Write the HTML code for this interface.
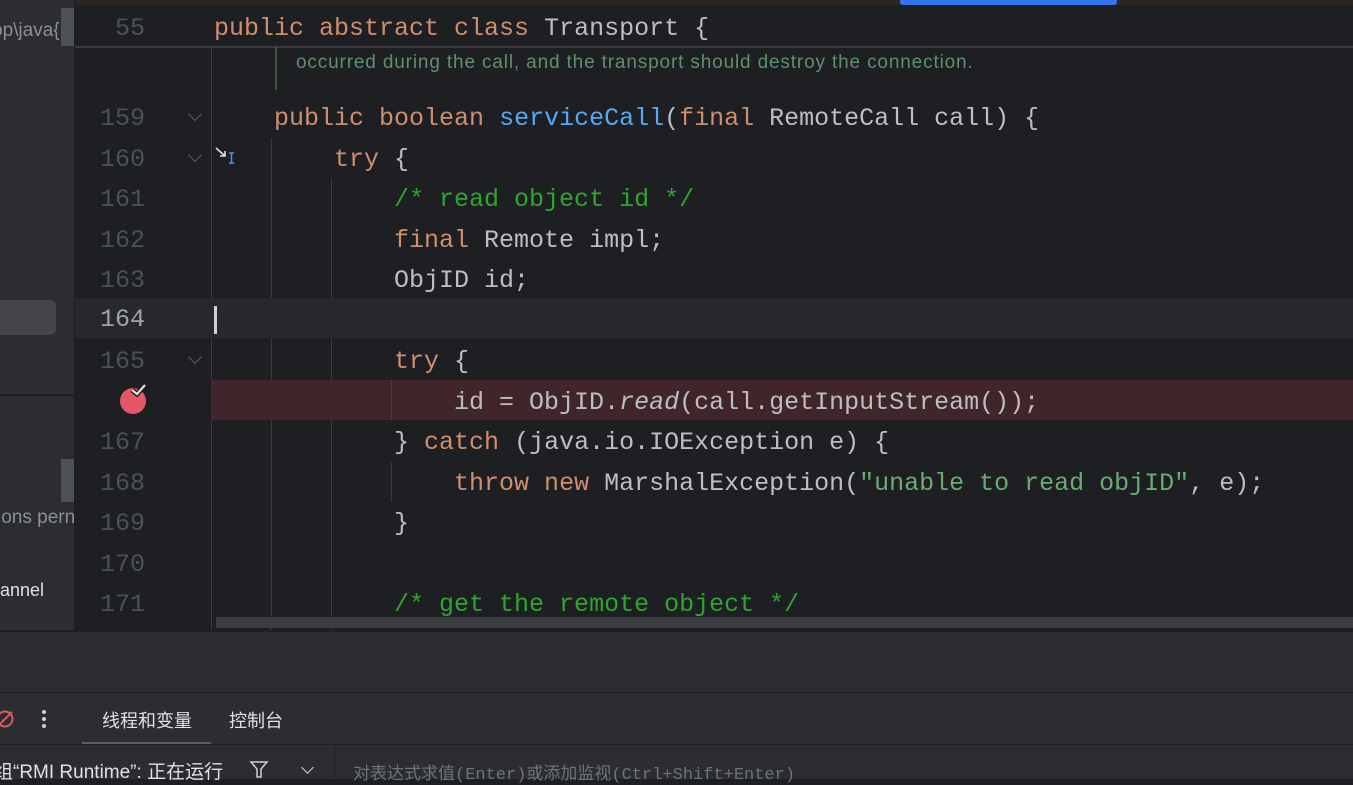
<!DOCTYPE html>
<html><head><meta charset="utf-8"><style>
body{margin:0;width:1353px;height:777px;overflow:hidden;background:#1e1f22;position:relative;font-family:"Liberation Sans","Noto Sans CJK SC",sans-serif}
.a{position:absolute}
.ln{position:absolute;left:75px;width:70px;text-align:right;font:25px/40px "Liberation Mono",monospace;color:#4b5059;margin-top:2px}
.c{position:absolute;left:214px;white-space:pre;font:25px/40px "Liberation Mono",monospace;color:#bcbec4;margin-top:2px}
.k{color:#cf8e6d}.m{color:#56a8f5}.s{color:#6aab73}.cm{color:#2ea52e}.i{font-style:italic}
.g{position:absolute;width:1px;background:#393b40}
.f{position:absolute;left:190px;width:9px;height:9px;border-right:1.5px solid #5a5d63;border-bottom:1.5px solid #5a5d63;transform:rotate(45deg)}
</style></head><body>
<!-- left panel -->
<div class="a" style="left:0;top:0;width:74px;height:630px;background:#2b2d30"></div>
<div class="a" style="top:20px;font-size:19px;color:#8c8f94;white-space:nowrap;left:-8px">op\java{</div>
<div class="a" style="left:61px;top:8px;width:13px;height:38px;background:#4e5157"></div>
<div class="a" style="left:0;top:300px;width:56px;height:35px;background:#43454a;border-radius:0 6px 6px 0"></div>
<div class="a" style="left:0;top:394px;width:74px;height:2px;background:#1e1f22"></div>
<div class="a" style="left:61px;top:459px;width:13px;height:43px;background:#4e5157"></div>
<div class="a" style="left:-3px;top:507px;font-size:19px;color:#8c8f94;white-space:nowrap">ions pern</div>
<div class="a" style="left:0;top:580px;font-size:18px;color:#dfe1e5">annel</div>
<!-- top strip -->
<div class="a" style="left:75px;top:0;width:1278px;height:5px;background:#2b2622"></div>
<div class="a" style="left:900px;top:0;width:217px;height:5px;background:#3574f0;border-radius:0 0 3px 3px"></div>
<div class="a" style="left:75px;top:46px;width:1278px;height:2px;background:#393b40"></div>
<div class="ln" style="top:7px">55</div>
<div class="c" style="top:7px"><span class="k">public abstract class</span> Transport {</div>
<!-- gutter separator & guides -->
<div class="g" style="left:211px;top:48px;height:582px"></div>
<div class="g" style="left:271px;top:138px;height:492px"></div>
<div class="g" style="left:331px;top:178px;height:452px"></div>
<div class="g" style="left:391px;top:380px;height:40px"></div>
<div class="g" style="left:391px;top:462px;height:40px"></div>
<!-- doc comment -->
<div class="a" style="left:275px;top:47px;width:2px;height:43px;background:#3d5a40"></div>
<div class="a" style="left:296px;top:52px;font-size:19px;letter-spacing:0.85px;color:#5f8f6e;white-space:nowrap">occurred during the call, and the transport should destroy the connection.</div>
<!-- current line -->
<div class="a" style="left:75px;top:298px;width:1278px;height:40px;background:#26282e"></div>
<div class="a" style="left:214px;top:306px;width:3px;height:28px;background:#ced0d6"></div>
<!-- breakpoint line -->
<div class="a" style="left:211px;top:380px;width:1142px;height:40px;background:#40252a"></div>
<div class="g" style="left:391px;top:380px;height:40px;background:#4a3a3e"></div>
<div class="a" style="left:120px;top:388px;width:26px;height:26px;border-radius:50%;background:#e55765"></div>
<svg class="a" style="left:130px;top:383px" width="18" height="14"><path d="M2 7 L7 11 L15 2" stroke="#1e1f22" stroke-width="5" fill="none"/><path d="M2 7 L7 11 L15 2" stroke="#dfe1e5" stroke-width="2.2" fill="none"/></svg>

<div class="ln" style="top:97px">159</div><div class="f" style="top:109px"></div>
<div class="c" style="top:97px">    <span class="k">public boolean</span> <span class="m">serviceCall</span>(<span class="k">final</span> RemoteCall call) {</div>
<div class="ln" style="top:138px">160</div><div class="f" style="top:150px"></div>
<svg class="a" style="left:214px;top:146px" width="24" height="20"><path d="M2 2 L11 10 M6 10 H11 V5" stroke="#dfe1e5" stroke-width="1.6" fill="none"/><path d="M15 7 H20 M17.5 7 V17 M15 17 H20" stroke="#4d8ff0" stroke-width="1.5" fill="none"/></svg>
<div class="c" style="top:138px">        <span class="k">try</span> {</div>
<div class="ln" style="top:178px">161</div>
<div class="c" style="top:178px">            <span class="cm">/* read object id */</span></div>
<div class="ln" style="top:219px">162</div>
<div class="c" style="top:219px">            <span class="k">final</span> Remote impl;</div>
<div class="ln" style="top:259px">163</div>
<div class="c" style="top:259px">            ObjID id;</div>
<div class="ln" style="top:298px;color:#a1a3ab">164</div>
<div class="ln" style="top:340px">165</div><div class="f" style="top:352px"></div>
<div class="c" style="top:340px">            <span class="k">try</span> {</div>
<div class="c" style="top:381px">                id = ObjID.<span class="i">read</span>(call.getInputStream());</div>
<div class="ln" style="top:421px">167</div>
<div class="c" style="top:421px">            } <span class="k">catch</span> (java.io.IOException e) {</div>
<div class="ln" style="top:462px">168</div>
<div class="c" style="top:462px">                <span class="k">throw new</span> MarshalException(<span class="s">"unable to read objID"</span>, e);</div>
<div class="ln" style="top:502px">169</div>
<div class="c" style="top:502px">            }</div>
<div class="ln" style="top:543px">170</div>
<div class="ln" style="top:583px">171</div>
<div class="c" style="top:583px">            <span class="cm">/* get the remote object */</span></div>
<!-- h scrollbar -->
<div class="a" style="left:216px;top:617px;width:1137px;height:11px;background:#3a3c40"></div>
<!-- bottom panel -->
<div class="a" style="left:0;top:630px;width:1353px;height:147px;background:#2b2d30;border-top:2px solid #1e1f22"></div>
<div class="a" style="left:0;top:692px;width:1353px;height:1px;background:#1e1f22"></div>
<svg class="a" style="left:-6px;top:708px" width="22" height="22"><circle cx="11" cy="11" r="7.5" stroke="#db5c5c" stroke-width="2" fill="none"/><path d="M4 18 L18 4" stroke="#db5c5c" stroke-width="2"/></svg>
<div class="a" style="left:42px;top:710px;width:4px;height:4px;border-radius:2px;background:#ced0d6;box-shadow:0 7px 0 #ced0d6,0 14px 0 #ced0d6"></div>
<div class="a" style="left:102px;top:707px;font-size:18px;color:#dfe1e5">线程和变量</div>
<div class="a" style="left:229px;top:707px;font-size:18px;color:#dfe1e5">控制台</div>
<div class="a" style="left:82px;top:742px;width:129px;height:3px;background:#5a5d63"></div>
<div class="a" style="left:0;top:744px;width:1353px;height:1px;background:#1e1f22"></div>
<div class="a" style="left:334px;top:745px;width:1px;height:32px;background:#1e1f22"></div>
<div class="a" style="left:-6px;top:757px;font-size:19px;color:#dfe1e5;white-space:nowrap">组“RMI Runtime”: 正在运行</div>
<svg class="a" style="left:249px;top:760px" width="20" height="18"><path d="M2 2 H18 L12 9 V17 H8 V9 Z" stroke="#ced0d6" stroke-width="1.5" fill="none"/></svg>
<div class="a" style="left:303px;top:763px;width:8px;height:8px;border-right:1.5px solid #ced0d6;border-bottom:1.5px solid #ced0d6;transform:rotate(45deg)"></div>
<div class="a" style="left:353px;top:759px;font-family:'Liberation Mono','Noto Sans CJK SC',monospace;font-size:17px;color:#6f737a;white-space:nowrap">对表达式求值(Enter)或添加监视(Ctrl+Shift+Enter)</div>
</body></html>
